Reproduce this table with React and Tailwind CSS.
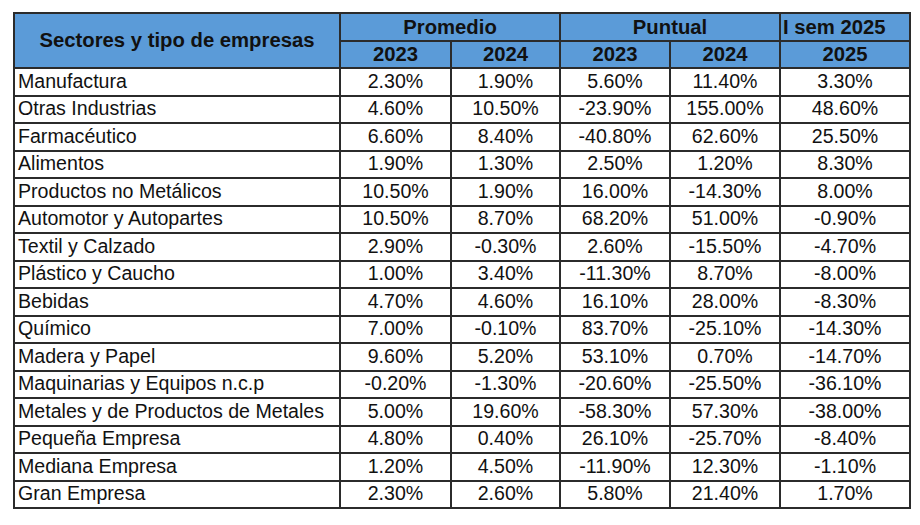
const rows = [
  ['Manufactura', '2.30%', '1.90%', '5.60%', '11.40%', '3.30%'],
  ['Otras Industrias', '4.60%', '10.50%', '-23.90%', '155.00%', '48.60%'],
  ['Farmacéutico', '6.60%', '8.40%', '-40.80%', '62.60%', '25.50%'],
  ['Alimentos', '1.90%', '1.30%', '2.50%', '1.20%', '8.30%'],
  ['Productos no Metálicos', '10.50%', '1.90%', '16.00%', '-14.30%', '8.00%'],
  ['Automotor y Autopartes', '10.50%', '8.70%', '68.20%', '51.00%', '-0.90%'],
  ['Textil y Calzado', '2.90%', '-0.30%', '2.60%', '-15.50%', '-4.70%'],
  ['Plástico y Caucho', '1.00%', '3.40%', '-11.30%', '8.70%', '-8.00%'],
  ['Bebidas', '4.70%', '4.60%', '16.10%', '28.00%', '-8.30%'],
  ['Químico', '7.00%', '-0.10%', '83.70%', '-25.10%', '-14.30%'],
  ['Madera y Papel', '9.60%', '5.20%', '53.10%', '0.70%', '-14.70%'],
  ['Maquinarias y Equipos n.c.p', '-0.20%', '-1.30%', '-20.60%', '-25.50%', '-36.10%'],
  ['Metales y de Productos de Metales', '5.00%', '19.60%', '-58.30%', '57.30%', '-38.00%'],
  ['Pequeña Empresa', '4.80%', '0.40%', '26.10%', '-25.70%', '-8.40%'],
  ['Mediana Empresa', '1.20%', '4.50%', '-11.90%', '12.30%', '-1.10%'],
  ['Gran Empresa', '2.30%', '2.60%', '5.80%', '21.40%', '1.70%'],
]

export default function App() {
  const th = 'border-2 border-[#2b2b2b] bg-[#5b9bd8] font-bold text-[20.3px] leading-none text-[#111] p-0'
  const td = 'border-2 border-[#2b2b2b] text-[19.6px] leading-none text-[#111] p-0 text-center'

  return (
    <div className="w-[920px] h-[525px] bg-white pt-[12px] pl-[13px] font-['Liberation_Sans',Arial,sans-serif]">
      <table className="table-fixed border-collapse w-[896px]">
        <colgroup>
          <col className="w-[326px]" />
          <col className="w-[111px]" />
          <col className="w-[109px]" />
          <col className="w-[110px]" />
          <col className="w-[110px]" />
          <col className="w-[130px]" />
        </colgroup>
        <thead>
          <tr className="h-[28px]">
            <th rowSpan={2} className={`${th} text-center`}>Sectores y tipo de empresas</th>
            <th colSpan={2} className={`${th} text-center`}>Promedio</th>
            <th colSpan={2} className={`${th} text-center`}>Puntual</th>
            <th className={`${th} text-left pl-[2px] whitespace-nowrap`}>I sem 2025</th>
          </tr>
          <tr className="h-[27px]">
            <th className={`${th} text-center`}>2023</th>
            <th className={`${th} text-center`}>2024</th>
            <th className={`${th} text-center`}>2023</th>
            <th className={`${th} text-center`}>2024</th>
            <th className={`${th} text-center`}>2025</th>
          </tr>
        </thead>
        <tbody>
          {rows.map(r => (
            <tr key={r[0]} className="h-[27.5px]">
              <td className={`${td} !text-left pl-[3px] whitespace-nowrap`}>{r[0]}</td>
              {r.slice(1).map((v, i) => (
                <td key={i} className={td}>{v}</td>
              ))}
            </tr>
          ))}
        </tbody>
      </table>
    </div>
  )
}
